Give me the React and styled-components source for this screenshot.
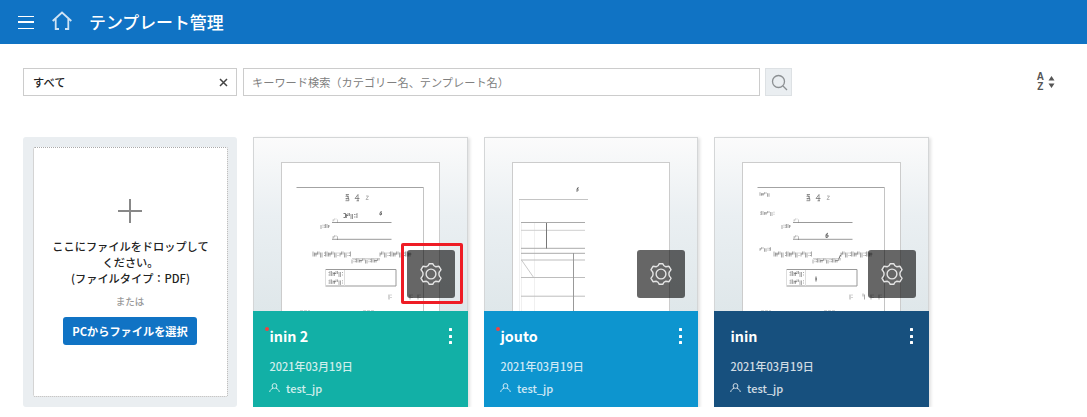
import React from "react";
import styled, { createGlobalStyle } from "styled-components";

const Global = createGlobalStyle`
  *{box-sizing:border-box}
  body{margin:0;background:#fff;color:#222;font-family:"Noto Sans CJK JP","Noto Sans",sans-serif;font-size:11.2px;overflow:hidden}
  button,input{font:inherit}
`;

const Header = styled.header`
  height:44px;background:#1073c4;display:flex;align-items:center;padding-left:18px;color:#fff;
`;
const Burger = styled.button`
  width:16px;height:13px;padding:0;border:0;background:none;display:flex;flex-direction:column;justify-content:space-between;
`;
const BurgerLine = styled.span`
  display:block;width:16px;height:${p => p.$thick ? 2 : 1}px;background:#fff;
`;
const HomeIcon = styled.svg`
  width:20px;height:20px;margin-left:18px;margin-top:-2px;
`;
const Title = styled.h1`
  margin:-1px 0 0 17px;font-size:16.9px;line-height:24px;font-weight:500;white-space:nowrap;
`;

const Toolbar = styled.div`
  display:flex;align-items:flex-start;padding:24px 32px 0 23px;
`;
const Field = styled.div`
  width:${p => p.$width}px;height:28px;border:1px solid #ccc;margin-right:${p => p.$gap}px;
  display:flex;align-items:center;justify-content:space-between;padding:0 8px 0 ${p => p.$inset}px;
`;
const FieldValue = styled.span`
  line-height:16px;margin-top:-1px;font-weight:500;color:#222;
`;
const SearchInput = styled.input`
  border:0;outline:0;padding:0;width:100%;height:20px;margin-top:-1px;color:#333;background:none;
  &::placeholder{color:#808080;opacity:1}
`;
const SearchButton = styled.button`
  width:27px;height:28px;border:1px solid #dde1e4;background:#eaeef1;padding:0 0 0 1px;display:flex;align-items:center;justify-content:center;
`;
const SortButton = styled.button`
  margin:4px 0 0 auto;padding:0;border:0;background:none;display:flex;align-items:center;gap:4px;
`;
const SortLetters = styled.span`
  display:flex;flex-direction:column;font:700 10px/10px "Liberation Sans",sans-serif;color:#555;
`;

const Grid = styled.main`
  display:flex;gap:16px;padding:41px 0 0 23px;
`;
const DropCard = styled.section`
  width:214px;height:270px;background:#eaeef1;border-radius:3px;padding:10px 9px 10px 10px;
`;
const DropZone = styled.div`
  height:250px;border:1px dotted #aaa;border-radius:2px;background:#fff;padding:51px 1px 0 0;
  display:flex;flex-direction:column;align-items:center;text-align:center;
`;
const DropText = styled.p`
  margin:15px 0 0 1px;width:160px;line-height:16px;font-weight:500;color:#222;
`;
const OrText = styled.span`
  margin-top:8px;font-size:9.5px;line-height:14px;font-weight:500;color:#999;
`;
const PickButton = styled.button`
  margin-top:9px;width:134px;height:28px;border:0;border-radius:3px;background:#1073c4;color:#fff;padding:0 0 1px;font-weight:700;white-space:nowrap;
`;

const Card = styled.article`
  width:${p => p.$width}px;height:270px;display:flex;flex-direction:column;box-shadow:2px 1px 3px rgba(0,0,0,.12);
`;
const Preview = styled.div`
  position:relative;height:174px;border:1px solid #d4d6d7;border-bottom:0;padding:24px 27px 0;
  background:linear-gradient(#fbfbfb,#eaeff2 45%,#dfe7ea);
`;
const Sheet = styled.div`
  height:149px;border:1px solid #ccc;border-bottom:0;background:#fff;overflow:hidden;
`;
const SheetArt = styled.svg`
  display:block;width:157px;height:148px;
`;
const GearButton = styled.button`
  position:absolute;right:12px;bottom:13px;width:48px;height:48px;border:0;border-radius:3px;padding:0;
  background:rgba(0,0,0,.6);display:flex;align-items:center;justify-content:center;
`;
const Highlight = styled.span`
  position:absolute;right:4px;bottom:7px;width:62px;height:61px;border:3px solid #ee1c25;border-radius:2px;
`;
const Info = styled.div`
  position:relative;height:96px;background:${p => p.$color};color:#fff;padding:13px 16px 0 16px;
`;
const InfoHead = styled.div`
  display:flex;justify-content:space-between;
`;
const Name = styled.h2`
  margin:0 0 0 .5px;font-size:14.3px;line-height:23px;font-weight:700;
`;
const NewDot = styled.i`
  position:absolute;left:12px;top:16px;width:4px;height:4px;border-radius:50%;background:#f04141;
`;
const Menu = styled.button`
  margin-top:4px;padding:0;border:0;background:none;width:3px;height:16px;display:flex;flex-direction:column;justify-content:space-between;
`;
const MenuDot = styled.span`
  width:3px;height:3px;border-radius:.5px;background:#fff;
`;
const DateText = styled.div`
  margin:11px 0 0 .5px;font-size:11px;line-height:16px;font-weight:500;opacity:.8;
`;
const Owner = styled.div`
  display:flex;align-items:center;margin-top:6px;gap:6px;font-size:11px;line-height:16px;font-weight:500;opacity:.8;
`;

// Illegible miniature writing, drawn as irregular pen ticks.
const Scribble = ({ x, y, w, h = 5, o = 0.65 }) => {
  let d = "";
  for (let i = 0; i < w; i += 1.5) {
    const k = Math.round(i * 7 + w) % 5;
    if (k === 4) d += `M${x + i} ${y - h * 0.2}h1M${x + i} ${y + h * 0.3}h1`;
    else d += `M${x + i} ${y - h / 2 + (k % 2)}v${h - (k % 3)}`;
    if (k === 1) d += `M${x + i} ${y}h1.5`;
  }
  return <path d={d} stroke="#222" strokeWidth=".6" opacity={o} fill="none" />;
};

const ProxyDoc = ({ filled }) => (
  <SheetArt viewBox="282 163 157 148" fill="none" stroke="#999">
    <path d="M296.500 187.500H423.500" stroke="#a3a3a3" />
    <path d="M423.500 187V311" stroke="#c4c4c4" />
    <g stroke="#666" strokeWidth=".7">
      <path d="M346 194.500h3M345.500 196.300h3.500M346 194.500l2.500 3-2.500 1.500M348.500 198l.500 2.500M345.500 198.700h3.500M345.500 200.700h3.500" />
      <path d="M358 201v-6.500l-3 4h4.500M356.500 200.800h2.500" />
    </g>
    <path d="M366 196h2.500l-2.500 3.500h2.500" stroke="#888" strokeWidth=".6" />
    <path d="M332 222.500H391.500M332 239.300H391.500" />
    <Scribble x={333} y={220} w={6} h={3} o={.4} />
    <Scribble x={333} y={237} w={6} h={3.5} o={.5} />
    <Scribble x={321} y={226} w={8} h={4} />
    <Scribble x={313} y={254} w={10} />
    <Scribble x={324} y={254} w={14} />
    <Scribble x={340} y={254} w={11} />
    <Scribble x={380} y={254} w={31} />
    <Scribble x={352} y={260.5} w={28} h={4} />
    <path d="M352 258.500h28" stroke="#aaa" strokeWidth=".5" />
    <path d="M325.500 269.500H396V286H325.500" />
    <path d="M325.500 269.500V286M344.500 270V286" stroke="#ddd" />
    <Scribble x={328.5} y={273.5} w={14} />
    <Scribble x={328.5} y={281.7} w={14} h={4.5} />
    <Scribble x={389} y={296} w={3} />
    <Scribble x={402} y={296} w={2} />
    <Scribble x={410} y={296} w={3} />
    <Scribble x={418} y={296} w={3} />
    <path d="M300 310.500h10M363 310.500h11" stroke="#bbb" strokeWidth=".6" strokeDasharray="3 1" />
    {filled ? (
      <>
        <Scribble x={299} y={194} w={10} h={3.5} />
        <Scribble x={299} y={213} w={14} h={4} o={.55} />
        <Scribble x={299} y={249} w={11} h={3.5} />
        <path d="M367 233l-2 1.500v3l2-.500v-2h-2M379.500 255l-1.500 3.500M355 276.500v5M354.500 279h1.500" stroke="#444" strokeWidth=".8" />
      </>
    ) : (
      <>
        <path d="M343.500 213.500h2v4h-2" stroke="#444" strokeWidth=".7" />
        <Scribble x={346.5} y={215.5} w={11} o={.8} />
        <path d="M381.500 211l-1.500 2v2l1.500-.500v-2" stroke="#444" strokeWidth=".8" />
      </>
    )}
  </SheetArt>
);

const TransferDoc = () => (
  <SheetArt viewBox="513 163 157 148" fill="none" stroke="#bdbdbd">
    <path d="M578.500 187l-1.500 2v2.500l1-1v-2h-1" stroke="#555" strokeWidth=".8" />
    <path d="M519 199.500H588" stroke="#c4c4c4" />
    <path d="M519.500 200V311M521.500 223V311M534.500 223V311" stroke="#f0f0f0" />
    <path d="M521 222.500H585M521 248.300H585M521 253.300H585" stroke="#aaa" />
    <path d="M521 230.300H585" stroke="#cfcfcf" />
    <path d="M521 260H585M521 277.500H585M521 296.200H585" stroke="#bdbdbd" />
    <path d="M546.500 223V248.500" stroke="#777" />
    <path d="M573.500 253V311" stroke="#999" />
    <path d="M521.500 260l12.500 18" stroke="#bbb" strokeWidth=".8" />
  </SheetArt>
);

const Gear = () => (
  <svg width="24" height="24" viewBox="-12 -12 24 24" fill="none" stroke="#e4e4e4" strokeWidth="1.4" strokeLinejoin="round">
    <circle r="4.900" />
    <path d="M-1.800 -10.300H1.800Q2.600 -7.600 4.800 -7.200L8 -7.700 10 -4.300Q7.700 -2 7.900 0 7.700 2 10 4.300L8 7.700 4.800 7.200Q2.600 7.600 1.800 10.300H-1.800Q-2.600 7.600 -4.800 7.200L-8 7.700 -10 4.300Q-7.700 2 -7.900 0 -7.700 -2 -10 -4.300L-8 -7.700 -4.800 -7.200Q-2.600 -7.600 -1.800 -10.300Z" />
  </svg>
);

const TemplateCard = ({ width, color, name, isNew, highlighted, children }) => (
  <Card $width={width}>
    <Preview>
      <Sheet>{children}</Sheet>
      <GearButton aria-label="設定"><Gear /></GearButton>
      {highlighted && <Highlight />}
    </Preview>
    <Info $color={color}>
      {isNew && <NewDot />}
      <InfoHead>
        <Name>{name}</Name>
        <Menu aria-label="メニュー"><MenuDot /><MenuDot /><MenuDot /></Menu>
      </InfoHead>
      <DateText>2021年03月19日</DateText>
      <Owner>
        <svg width="11" height="10" viewBox="0 0 11 10" fill="none" stroke="#fff">
          <circle cx="5.500" cy="3" r="2.400" />
          <path d="M.7 9C.9 7 2.500 5.800 4 5.300M10.300 9C10.100 7 8.500 5.800 7 5.300" />
        </svg>
        <span>test_jp</span>
      </Owner>
    </Info>
  </Card>
);

export default function App() {
  return (
    <>
      <Global />
      <Header>
        <Burger aria-label="メニュー"><BurgerLine /><BurgerLine $thick /><BurgerLine /></Burger>
        <HomeIcon viewBox="0 0 20 20" fill="none" stroke="#cfe3f4" strokeWidth="1.8">
          <path d="M.7 10L10 1.500 19.300 10M3.700 8V18H7M16.300 8V18H13" />
        </HomeIcon>
        <Title>テンプレート管理</Title>
      </Header>
      <Toolbar>
        <Field $width={214} $gap={6} $inset={9}>
          <FieldValue>すべて</FieldValue>
          <svg width="9" height="9" viewBox="0 0 9 9" stroke="#444" strokeWidth="1.5"><path d="M1 1l7 7M8 1L1 8" /></svg>
        </Field>
        <Field $width={517} $gap={5} $inset={8}>
          <SearchInput placeholder="キーワード検索（カテゴリー名、テンプレート名）" />
        </Field>
        <SearchButton aria-label="検索">
          <svg width="17" height="17" viewBox="0 0 17 17" fill="none" stroke="#8c9093" strokeWidth="1.3"><circle cx="7.500" cy="7.500" r="6" /><path d="M12 12l4 4" /></svg>
        </SearchButton>
        <SortButton aria-label="並べ替え">
          <SortLetters><span>A</span><span>Z</span></SortLetters>
          <svg width="7" height="12" viewBox="0 0 7 12" fill="#555"><path d="M.5 4.500L3.500 0 6.500 4.500ZM.5 7.500H6.500L3.500 12Z" /></svg>
        </SortButton>
      </Toolbar>
      <Grid>
        <DropCard>
          <DropZone>
            <svg width="24" height="24" viewBox="0 0 24 24" stroke="#888" strokeWidth="2"><path d="M12 0V24M0 12H24" /></svg>
            <DropText>ここにファイルをドロップしてください。<br />(ファイルタイプ：PDF)</DropText>
            <OrText>または</OrText>
            <PickButton>PCからファイルを選択</PickButton>
          </DropZone>
        </DropCard>
        <TemplateCard width={215} color="#12b0a6" name="inin 2" isNew highlighted><ProxyDoc /></TemplateCard>
        <TemplateCard width={214} color="#0d95cf" name="jouto" isNew><TransferDoc /></TemplateCard>
        <TemplateCard width={215} color="#17507e" name="inin"><ProxyDoc filled /></TemplateCard>
      </Grid>
    </>
  );
}
